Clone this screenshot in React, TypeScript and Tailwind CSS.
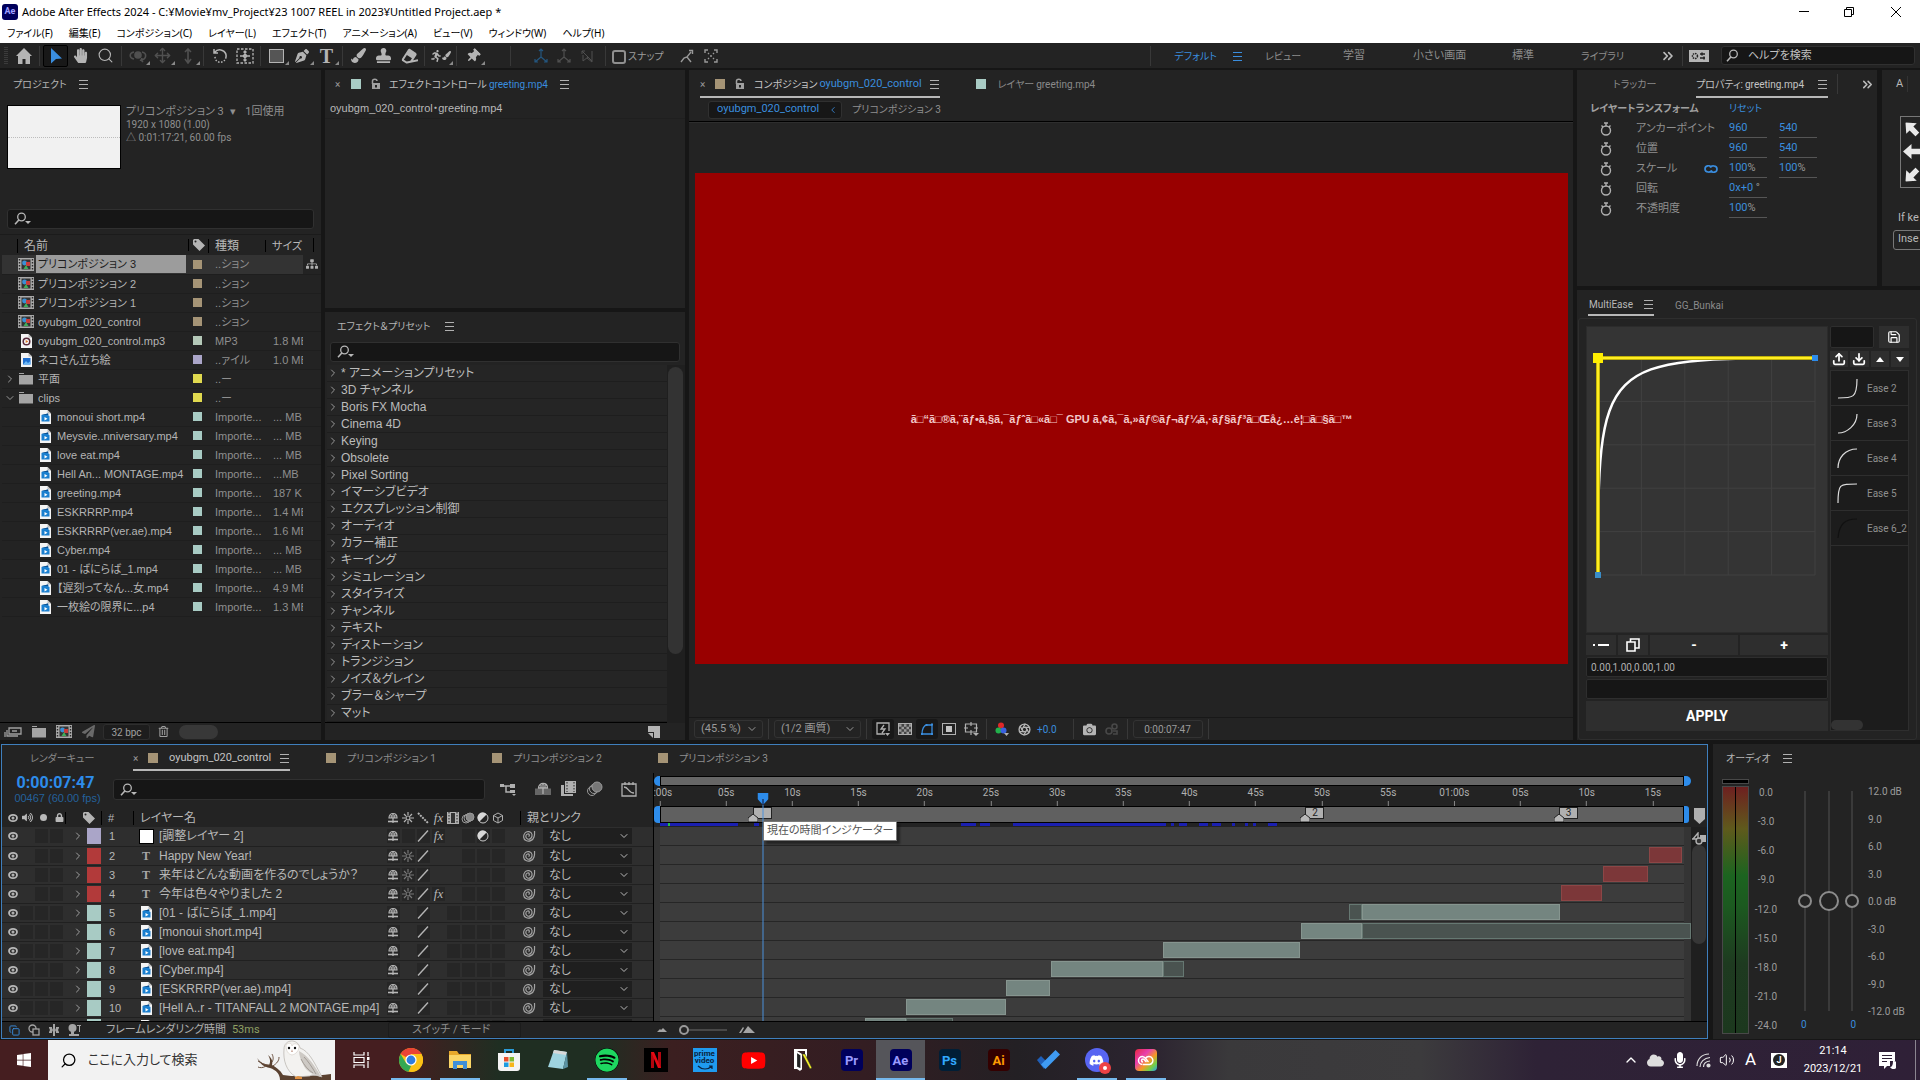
import React from "react";
import {
  FaHome, FaHandPaper, FaPenNib, FaPaintBrush, FaStamp, FaEraser, FaThumbtack, FaTag, FaVolumeUp, FaLock,
  FaLockOpen, FaRunning, FaCamera, FaMicrophone, FaSitemap, FaWindows, FaSpotify, FaYoutube, FaDiscord,
  FaCloud, FaRegTrashAlt, FaPaperPlane,
} from "react-icons/fa";
import { Search, ChevronRight, ChevronDown, ChevronsRight, Save, Upload, Download, Copy, Aperture, Move, Volume2, ChevronUp } from "lucide-react";

const LIST = "font-['Liberation_Sans','Noto_Sans_CJK_JP',sans-serif]";

function Burger({ className = "text-[#b0b0b0]" }: { className?: string }) {
  return (
    <svg className={"h-2.5 w-2.5 shrink-0 " + className} viewBox="0 0 10 10" stroke="currentColor" aria-hidden>
      <path d="M0 1.5h9M0 5.5h9M0 9.5h9" />
    </svg>
  );
}

function Magnifier({ menu = true }: { menu?: boolean }) {
  return (
    <svg className="h-3.5 w-[18px] shrink-0" viewBox="0 0 18 14" fill="none" aria-hidden>
      <circle cx="7.5" cy="5" r="3.8" stroke="#b8b8b8" strokeWidth="1.3" />
      <path d="M4.8 8L1 12.2" stroke="#b8b8b8" strokeWidth="1.6" />
      {menu && <path d="M11 9h6l-3 3z" fill="#b8b8b8" />}
    </svg>
  );
}

function SearchField({ label, className = "" }: { label: string; className?: string }) {
  return (
    <label className={"flex items-center rounded-[3px] border border-[#303030] bg-[#161616] pl-1.5 " + className}>
      <Magnifier />
      <input aria-label={label} className="min-w-0 flex-1 bg-transparent text-[11px] text-[#bbb] outline-none" />
    </label>
  );
}

function CompIcon() {
  return (
    <svg className="h-[13px] w-4 shrink-0" viewBox="0 0 16 13" aria-hidden>
      <rect width="16" height="13" fill="#a9a9a9" />
      <path d="M1.5 1v11M14.5 1v11" stroke="#2a2a2a" strokeWidth="1.4" strokeDasharray="1.6 1.4" />
      <rect x="3.5" y="1.5" width="9" height="10" fill="#333" />
      <circle cx="6.5" cy="5" r="2.4" fill="#3b8fd4" />
      <rect x="8" y="4" width="4" height="4" fill="#c93b3b" />
      <path d="M5.5 11l2.5-4 2.5 4z" fill="#3fae5a" />
    </svg>
  );
}

function FileIcon({ kind = "video" }: { kind?: "video" | "audio" | "image" }) {
  return (
    <svg className="h-3.5 w-[11px] shrink-0" viewBox="0 0 11 14" aria-hidden>
      <path d="M0 0h7.5L11 3.500V14H0z" fill="#f4f4f4" />
      <path d="M7.500 0L11 3.500H7.500z" fill="#b9b9b9" />
      {kind === "video" && <><path d="M1.500 5l6.500-1.500.4 2L9.500 6v5.500h-8z" fill="#1a7fcf" /><path d="M1.500 5l6.500-1.500.3 1.500H1.500z" fill="#0c4f8f" /><path d="M4.500 7l3 1.700-3 1.700z" fill="#fff" /></>}
      {kind === "image" && <><rect x="2" y="5" width="7.500" height="6.500" fill="#1f6fd0" /><path d="M2 11.500l3-3.500 2 2 2.500-2v3.500z" fill="#6bb8f5" /></>}
      {kind === "audio" && <><circle cx="5.500" cy="7.500" r="3.300" fill="none" stroke="#5a2b3b" strokeWidth="1.500" /><path d="M4.700 6l2.600 1.500-2.600 1.500z" fill="#e07a2b" /></>}
    </svg>
  );
}

function FolderIcon() {
  return (
    <svg className="h-3 w-3.5 shrink-0" viewBox="0 0 14 12" fill="#a4a4a4" aria-hidden>
      <path d="M0 0h5v1H0zM0 2h14v9.500H0z" />
    </svg>
  );
}

function Tag() {
  return (
    <svg className="h-3 w-3 shrink-0" viewBox="0 0 12 12" fill="#b4b4b4" aria-hidden>
      <path fillRule="evenodd" d="M0 1l1-1h4.500L12 6.500 6.500 12 0 5.500zM2.500 1.500a1 1 0 100 2 1 1 0 000-2z" />
    </svg>
  );
}

function Unlocked() {
  return (
    <svg className="h-3 w-[9px] shrink-0" viewBox="0 0 9 12" aria-hidden>
      <path d="M1.500 6V3C1.500.500 6 .500 6 3" fill="none" stroke="#a0a0a0" strokeWidth="1.500" />
      <path fillRule="evenodd" d="M1 5h8v6H1zM4 7h2v2.500H4z" fill="#a0a0a0" />
    </svg>
  );
}

/* ---------- title, menus, tool bar ---------- */

function TitleBar() {
  return (
    <header className="flex h-6 shrink-0 items-center bg-white text-black">
      <span className="ml-0.5 grid h-4 w-4 place-items-center rounded-[3px] bg-[#00005b] text-[9px] font-bold text-[#9f9fff]">Ae</span>
      <h1 className="ml-1 font-['Noto_Sans','Noto_Sans_CJK_JP',sans-serif] text-[11px]">Adobe After Effects 2024 - C:¥Movie¥mv_Project¥23 1007 REEL in 2023¥Untitled Project.aep *</h1>
      <div className="ml-auto flex">
        <button aria-label="最小化" className="grid h-6 w-[45px] place-items-center"><svg className="h-3 w-3" viewBox="0 0 12 12" stroke="#000"><path d="M1 5.500h10" /></svg></button>
        <button aria-label="元に戻す" className="grid h-6 w-[45px] place-items-center"><svg className="h-3 w-3" viewBox="0 0 12 12" stroke="#000" fill="none"><path d="M1.500 3.500h7v7h-7zM3.500 3V1.500h7v7H9" /></svg></button>
        <button aria-label="閉じる" className="grid h-6 w-[49px] place-items-center"><svg className="h-3 w-3" viewBox="0 0 12 12" stroke="#000" fill="none"><path d="M1 1l10 10M11 1L1 11" /></svg></button>
      </div>
    </header>
  );
}

const MENUS = ["ファイル(F)", "編集(E)", "コンポジション(C)", "レイヤー(L)", "エフェクト(T)", "アニメーション(A)", "ビュー(V)", "ウィンドウ(W)", "ヘルプ(H)"];

function MenuBar() {
  return (
    <nav className="flex h-[19px] shrink-0 items-center gap-4 bg-white pl-[7px] font-['Noto_Sans','Noto_Sans_CJK_JP',sans-serif] text-[10px] text-black">
      {MENUS.map((m) => <button key={m} className="whitespace-nowrap">{m}</button>)}
    </nav>
  );
}

function Tool({ label, children, active, dim, more, wide }: { label: string; children: React.ReactNode; active?: boolean; dim?: boolean; more?: boolean; wide?: boolean }) {
  return (
    <button aria-label={label} className={"relative grid h-[22px] shrink-0 place-items-center rounded-[2px] " + (wide ? "w-[23px] " : "w-[25px] ") + (active ? "border border-black bg-[#181818] text-[#3a8dde]" : dim ? "text-[#505050]" : "text-[#b4b4b4]")}>
      {children}
      {more && <span className="absolute right-0 bottom-0.5 h-0 w-0 border-b-4 border-l-4 border-b-[#8a8a8a] border-l-transparent" />}
    </button>
  );
}

function Sep({ className = "w-[7px]" }: { className?: string }) {
  return <span className={"flex h-5 shrink-0 justify-center " + className}><span className="h-full w-px bg-[#383838]" /></span>;
}

function ToolBar() {
  return (
    <div className="mb-0.5 flex h-[25px] shrink-0 items-center bg-[#232323] text-[10px]">
      <svg className="ml-1 h-[18px] w-1" viewBox="0 0 4 18" stroke="#555" strokeDasharray="1 1"><path d="M1 0v18M3 0v18" /></svg>
      <span className="w-[3px]" />
      <Tool label="ホーム"><svg className="h-4 w-4" viewBox="0 0 16 16" fill="currentColor"><path d="M8 0l8 8h-2v8H9.500v-5h-3v5H2V8H0z" /></svg></Tool>
      <Sep />
      <Tool label="選択ツール" active><svg className="h-4 w-3.5" viewBox="0 0 14 16" fill="currentColor"><path d="M2 0l11 10.500-6 .5-5 4.500z" /></svg></Tool>
      <Tool label="手のひらツール"><FaHandPaper size={15} /></Tool>
      <Tool label="ズームツール"><Search size={17} strokeWidth={1.6} /></Tool>
      <Sep />
      <Tool label="カメラ周回" dim more><svg className="h-4 w-[18px]" viewBox="0 0 18 16" fill="none" stroke="currentColor" strokeWidth="1.600"><circle cx="9" cy="7" r="3" fill="currentColor" /><path d="M5 11C0 10 0 5 5 4M13 4c5 1 5 7-1 8l1-2M12 12l2 2" /></svg></Tool>
      <Tool label="カメラパン" dim more><Move size={17} strokeWidth={2} /></Tool>
      <Tool label="カメラドリー" dim more><svg className="h-4 w-3" viewBox="0 0 12 16" fill="none" stroke="currentColor" strokeWidth="1.600"><path d="M6 1v14M3 4l3-3 3 3M3 11l3 4 3-4" /></svg></Tool>
      <Sep />
      <Tool label="回転ツール"><svg className="h-4 w-[18px]" viewBox="0 0 18 16" fill="none" stroke="currentColor" strokeWidth="1.500"><path d="M3 1v4h4M3.500 4.500C8-1 16 3 15 9" /><path d="M15 9c-1 7-11 7-11-.5" strokeDasharray="1.500 1.500" /></svg></Tool>
      <Tool label="アンカーポイントツール"><svg className="h-4 w-[18px]" viewBox="0 0 18 16" fill="none" stroke="currentColor" strokeWidth="1.300"><rect x="1" y="1" width="16" height="14" strokeDasharray="2.500 1.500" /><path d="M9 3v10M4 8h10M7.500 4.500L9 3l1.500 1.500M7.500 11.500L9 13l1.500-1.500" /><circle cx="9" cy="8" r="1.500" /></svg></Tool>
      <Sep />
      <Tool label="長方形ツール" more><span className="h-3.5 w-[15px] border border-[#b4b4b4] bg-[#555]" /></Tool>
      <Tool label="ペンツール" more><FaPenNib size={14} /></Tool>
      <Tool label="横書き文字ツール" more><span className="font-['Liberation_Serif',serif] text-[20px] leading-5 font-bold">T</span></Tool>
      <Sep />
      <Tool label="ブラシツール"><FaPaintBrush size={15} /></Tool>
      <Tool label="コピースタンプツール"><FaStamp size={15} /></Tool>
      <Tool label="消しゴムツール"><FaEraser size={16} className="-rotate-12" /></Tool>
      <Sep />
      <Tool label="ロトブラシツール" more><span className="flex items-center"><FaRunning size={12} /><FaPaintBrush size={9} /></span></Tool>
      <Sep />
      <Tool label="パペットピンツール" more><FaThumbtack size={14} className="rotate-45" /></Tool>
      <Sep className="ml-4 w-[18px]" />
      <span className="w-2.5" />
      <Tool label="ローカル軸" wide dim><Axis className="text-[#24567f]" /></Tool>
      <Tool label="ワールド軸" wide dim><Axis /></Tool>
      <Tool label="ビュー軸" wide dim><svg className="h-3.5 w-3.5" viewBox="0 0 14 14" fill="none" stroke="currentColor"><path d="M2 2l10 10M2 5V2h3M12 2v11L7 9M3 6v6l5-4" /></svg></Tool>
      <Sep className="w-3.5" />
      <label className="flex items-center pt-0.5 text-[#9c9c9c]">
        <input type="checkbox" className="mr-0.5 ml-0 h-3.5 w-3.5 appearance-none rounded-[3px] border-2 border-[#8f8f8f]" />
        スナップ
      </label>
      <button aria-label="スナップ延長" className="ml-4 text-[#999]"><svg className="h-3.5 w-3.5" viewBox="0 0 14 14" fill="none" stroke="currentColor" strokeWidth="1.400"><path d="M1 13l3-4 3-1 4-5M7 8l4 5M9 1.500h3.500V5" /></svg></button>
      <button aria-label="スナップ範囲" className="ml-2.5 text-[#999]"><svg className="h-3.5 w-3.5" viewBox="0 0 14 14" fill="none" stroke="currentColor" strokeWidth="1.400"><path d="M1 4V1h3M10 1h3v3M13 10v3h-3M4 13H1v-3M4 5l1-1M9 4l1 1M10 9l-1 1M5 10L4 9M6 7h2" /></svg></button>
      <div className="ml-auto flex items-center text-[#8c8c8c]">
        <Sep />
        <button className="ml-5 pt-0.5 text-[#3a8dde]">デフォルト</button>
        <Burger className="mr-[22px] ml-4 text-[#3a8dde]" />
        <button className="w-[78px] pt-0.5 text-left">レビュー</button>
        <button className="w-[70px] pt-0.5 text-left text-[11px]">学習</button>
        <button className="w-[99px] pt-0.5 text-left text-[11px]">小さい画面</button>
        <button className="w-[69px] pt-0.5 text-left text-[11px]">標準</button>
        <button className="w-[79px] pt-0.5 text-left">ライブラリ</button>
        <button aria-label="その他のワークスペース" className="text-[#bbb]"><ChevronsRight size={16} strokeWidth={2.500} /></button>
        <Sep className="w-[13px]" />
        <span className="flex h-3 w-5 items-center justify-center bg-[#b4b4b4]">
          <svg className="h-2.5 w-4" viewBox="0 0 16 10" fill="none" stroke="#222" strokeWidth="1.500"><circle cx="4" cy="5" r="2.500" strokeDasharray="1.500 .8" /><path d="M9 3h5M9 7h5M11 1.500v3M13 5.500v3" /></svg>
        </span>
        <label className="mr-[5px] ml-3 flex h-[19px] w-[194px] items-center rounded-[3px] border border-[#303030] bg-[#161616] pl-1">
          <Magnifier menu={false} />
          <input aria-label="ヘルプを検索" placeholder="ヘルプを検索" className="ml-1 w-full bg-transparent pt-px text-[11px] outline-none placeholder:text-[#c0c0c0]" />
        </label>
      </div>
    </div>
  );
}

function Axis({ className = "" }: { className?: string }) {
  return <svg className={"h-4 w-4 " + className} viewBox="0 0 16 16" fill="none" stroke="currentColor" strokeWidth="1.200"><path d="M8 1v8M8 9l-6 5M8 9l6 5M6 3l2-2 2 2M2 11v3h3M14 11v3h-3" /></svg>;
}

/* ---------- project ---------- */

type Item = { name: string; icon: "comp" | "audio" | "image" | "folder" | "video"; color: string; type: string; size?: string; open?: boolean };
const TAN = "bg-[#a59476]";
const MINT = "bg-[#a8cbc4]";
const clip = (name: string, size: string): Item => ({ name, icon: "video", color: MINT, type: "Importe...", size });
const ITEMS: Item[] = [
  { name: "プリコンポジション 3", icon: "comp", color: TAN, type: "..ション" },
  { name: "プリコンポジション 2", icon: "comp", color: TAN, type: "..ション" },
  { name: "プリコンポジション 1", icon: "comp", color: TAN, type: "..ション" },
  { name: "oyubgm_020_control", icon: "comp", color: TAN, type: "..ション" },
  { name: "oyubgm_020_control.mp3", icon: "audio", color: "bg-[#b4c8b8]", type: "MP3", size: "1.8 MB" },
  { name: "ネコさん立ち絵", icon: "image", color: "bg-[#aaa5c8]", type: "..ァイル", size: "1.0 MB" },
  { name: "平面", icon: "folder", color: "bg-[#e0d94f]", type: "..ー" },
  { name: "clips", icon: "folder", color: "bg-[#e0d94f]", type: "..ー", open: true },
  clip("monoui short.mp4", "... MB"), clip("Meysvie..nniversary.mp4", "... MB"), clip("love eat.mp4", "... MB"),
  clip("Hell An... MONTAGE.mp4", "...MB"), clip("greeting.mp4", "187 K"), clip("ESKRRRP.mp4", "1.4 MB"),
  clip("ESKRRRP(ver.ae).mp4", "1.6 MB"), clip("Cyber.mp4", "... MB"), clip("01 - ばにらば_1.mp4", "... MB"),
  clip("【遅刻ってなん...女.mp4", "4.9 MB"), clip("一枚絵の限界に...p4", "1.3 MB"),
];

function ProjectPanel() {
  return (
    <section className="flex w-[321px] shrink-0 flex-col bg-[#232323]">
      <div className="flex h-7 items-center gap-3 pl-[13px] text-[#b4b4b4]"><button className="text-[10px]">プロジェクト</button><Burger /></div>
      <div className="mt-[7px] ml-[7px] flex h-[104px] gap-[5px]">
        <div className="flex h-16 w-[114px] items-center border border-black bg-[#f1f1f1]"><span className="w-full border-t border-dotted border-[#bdbdbd]" /></div>
        <div className="text-[11px] leading-[13px] text-[#8f8f8f]">
          <p>プリコンポジション 3 <span className="ml-1">▾</span> <span className="ml-1.5">1回使用</span></p>
          <p className="text-[10px]">1920 x 1080 (1.00)</p>
          <p className="text-[10px]">△ 0:01:17:21, 60.00 fps</p>
        </div>
      </div>
      <SearchField label="プロジェクトを検索" className="mx-[7px] h-5 shrink-0" />
      <div className={"mt-[5px] min-h-0 flex-1 overflow-hidden border-t border-[#1b1b1b] pl-0.5 " + LIST}>
        <table className="w-full table-fixed border-collapse text-[11px] leading-4">
          <colgroup><col /><col className="w-5" /><col className="w-[57px]" /><col className="w-[38px]" /><col className="w-[18px]" /></colgroup>
          <thead>
            <tr className="h-5 text-left text-[12px] text-[#b8b8b8]">
              <th className="p-0 pt-0.5 pl-[15px] font-normal"><span className="border-l border-black pl-1.5">名前</span></th>
              <th className="p-0"><span className="flex border-l border-black pl-1"><Tag /></span></th>
              <th className="p-0 pt-0.5 font-normal"><span className="border-l border-black pl-1.5">種類</span></th>
              <th className="p-0 pt-0.5 text-[11px] font-normal whitespace-nowrap"><span className="border-l border-black pl-1.5">サイズ</span></th>
              <th className="p-0"><span className="ml-2.5 block h-3.5 border-l border-black" /></th>
            </tr>
          </thead>
          <tbody>
            {ITEMS.map((it, i) => {
              const cell = "overflow-hidden whitespace-nowrap p-0 " + (i === 0 ? "bg-[#333333]" : "");
              return (
                <tr key={it.name} className="h-[19px] border-b border-[#1e1e1e]">
                  <td className={cell}>
                    <div className={"flex items-center " + (it.icon === "video" ? "pl-[38px]" : "")}>
                      {it.icon !== "video" && <span className="flex w-4 shrink-0 justify-center text-[#9a9a9a]">{it.icon === "folder" && (it.open ? <ChevronDown size={12} /> : <ChevronRight size={12} />)}</span>}
                      {it.icon === "comp" ? <CompIcon /> : it.icon === "folder" ? <span className="flex w-4 justify-center"><FolderIcon /></span> : it.icon === "video" ? <FileIcon /> : <span className="flex w-4 justify-center"><FileIcon kind={it.icon} /></span>}
                      <span className={"h-[18px] leading-[18px] " + (i === 0 ? "ml-0.5 mr-0.5 flex-1 bg-[#9c9c9c] pl-0.5 text-[#1c1c1c]" : it.icon === "video" ? "pl-1.5 text-[#b4b4b4]" : "pl-1 text-[#b4b4b4]")}>{it.name}</span>
                    </div>
                  </td>
                  <td className={cell}><span className={"ml-[5px] block h-[9px] w-[9px] " + it.color} /></td>
                  <td className={cell + " pl-[7px] text-[#8f8f8f]"}>{it.type}</td>
                  <td className={cell + " pl-2 text-[#8f8f8f]"}>{it.size}</td>
                  <td className="p-0 pl-[3px] text-[#b0b0b0]">{i === 0 && <FaSitemap size={12} />}</td>
                </tr>
              );
            })}
          </tbody>
        </table>
      </div>
      <div className="flex h-[18px] shrink-0 items-center border-t border-black text-[10px] text-[#a0a0a0]">
        <button aria-label="フッテージを変換" className="ml-1"><svg className="h-3 w-[18px]" viewBox="0 0 18 12" fill="none" stroke="currentColor" strokeWidth="1.300"><path d="M5 2h12v6H5zM8 5h5M3 4v6h11M1 6v5" /></svg></button>
        <button aria-label="新規フォルダー" className="ml-2.5"><FolderIcon /></button>
        <button aria-label="新規コンポジション" className="ml-2.5"><CompIcon /></button>
        <button aria-label="プロキシ" className="ml-2.5 text-[#6a6a6a]"><FaPaperPlane size={13} /></button>
        <button className="ml-2 h-4 w-[47px] rounded-[3px] border border-[#2e2e2e] bg-[#1d1d1d]">32 bpc</button>
        <button aria-label="削除" className="ml-2"><FaRegTrashAlt size={11} /></button>
        <span className="ml-2.5 h-3.5 w-[39px] rounded-full bg-[#383838]" />
      </div>
    </section>
  );
}

/* ---------- effects ---------- */

const EFFECTS = ["* アニメーションプリセット", "3D チャンネル", "Boris FX Mocha", "Cinema 4D", "Keying", "Obsolete", "Pixel Sorting", "イマーシブビデオ", "エクスプレッション制御", "オーディオ", "カラー補正", "キーイング", "シミュレーション", "スタイライズ", "チャンネル", "テキスト", "ディストーション", "トランジション", "ノイズ＆グレイン", "ブラー＆シャープ", "マット"];

function EffectsColumn() {
  return (
    <div className="flex w-[360px] shrink-0 flex-col gap-1">
      <section className="h-[238px] shrink-0 bg-[#232323] text-[10px]">
        <div className="flex h-7 items-center text-[#c0c0c0]">
          <button aria-label="タブを閉じる" className="ml-2.5 w-4 text-left text-[#999]">×</button>
          <span className="h-2.5 w-2.5 bg-[#a8cbc4]" />
          <span className="ml-2.5"><Unlocked /></span>
          <button className="ml-[9px] flex items-center gap-0.5"><span>エフェクトコントロール</span> <span className="text-[#3a8dde]">greeting.mp4</span></button>
          <Burger className="ml-3 text-[#b0b0b0]" />
        </div>
        <p className={"border-b border-[#1f1f1f] pl-[5px] text-[11px] leading-5 text-[#b8b8b8] " + LIST}>oyubgm_020_control・greeting.mp4</p>
      </section>
      <section className="flex min-h-0 flex-1 flex-col bg-[#232323]">
        <div className="flex h-7 items-center gap-3.5 pl-3 text-[10px] text-[#b4b4b4]"><button>エフェクト＆プリセット</button><Burger /></div>
        <SearchField label="エフェクトを検索" className="mx-[5px] mt-0.5 h-5 shrink-0" />
        <div className="mt-[3px] flex min-h-0 flex-1">
          <ul className={"min-w-0 flex-1 overflow-hidden border-b border-black text-[12px] text-[#bcbcbc] " + LIST}>
            {EFFECTS.map((e) => (
              <li key={e} className="ml-0.5 flex h-[17px] items-center border-b border-[#1e1e1e] bg-[#252525]">
                <ChevronRight size={12} className="mr-0.5 text-[#9a9a9a]" />
                <span className="leading-4">{e}</span>
              </li>
            ))}
          </ul>
          <div className="w-[18px] bg-[#1f1f1f]"><div className="mt-0.5 ml-px h-[287px] w-[15px] rounded-full bg-[#333333]" /></div>
        </div>
        <div className="flex h-[17px] shrink-0 items-center justify-end pr-[25px]">
          <button aria-label="新規アニメーションプリセット"><svg className="h-3 w-3" viewBox="0 0 12 12" fill="#b4b4b4"><path d="M0 0h12v12H6V6H0z" /><path d="M0 7l5 5V7z" /></svg></button>
        </div>
      </section>
    </div>
  );
}

/* ---------- composition viewer ---------- */

function CompPanel() {
  return (
    <section className="flex min-w-0 flex-1 flex-col bg-[#232323] text-[10px]">
      <div className="flex h-7 shrink-0 items-stretch text-[#c8c8c8]">
        <div className="ml-[11px] flex items-center border-b-2 border-[#b8b8b8] pt-0.5">
          <button aria-label="タブを閉じる" className="w-[15px] text-left text-[#999]">×</button>
          <span className="h-2.5 w-2.5 bg-[#a59476]" />
          <span className="ml-2.5"><Unlocked /></span>
          <button className="ml-2.5 flex items-center gap-0.5"><span>コンポジション</span><span className="text-[11px] text-[#3a8dde]">oyubgm_020_control</span></button>
          <Burger className="ml-2 text-[#b0b0b0]" />
        </div>
        <button className="ml-9 flex items-center gap-0.5 text-[#8a8a8a]"><span className="mr-2.5 h-2.5 w-2.5 bg-[#a8cbc4]" /><span>レイヤー</span><span>greeting.mp4</span></button>
      </div>
      <div className="flex h-6 shrink-0 items-center border-b border-black">
        <button className="ml-[19px] flex h-[18px] w-[134px] items-center justify-between rounded-[3px] border border-[#303030] bg-[#171717] pr-[3px] pl-2 text-[11px] text-[#3a8dde]">oyubgm_020_control<ChevronRight size={10} className="rotate-180" /></button>
        <button className="ml-2.5 text-[#8f8f8f]">プリコンポジション 3</button>
      </div>
      <div className="flex min-h-0 flex-1 flex-col border-t border-[#2e2e2e] pt-[50px] pr-[5px] pb-[53px] pl-1.5">
        <div className="grid flex-1 place-items-center bg-[#990000]">
          <p className="pt-px font-['Liberation_Sans',sans-serif] text-[11px] font-bold whitespace-nowrap text-[#f2c9c9]">ã□“ã□®ã‚¨ãƒ•ã‚§ã‚¯ãƒˆã□«ã□¯ GPU ã‚¢ã‚¯ã‚»ãƒ©ãƒ¬ãƒ¼ã‚·ãƒ§ãƒ³ã□Œå¿…è¦□ã□§ã□™</p>
        </div>
      </div>
      <div className="flex h-[23px] shrink-0 items-center border-t border-[#181818] pl-[5px] text-[11px] text-[#9a9a9a]">
        <button className="flex h-[18px] w-[69px] items-center justify-between rounded-[3px] border border-[#333] px-1.5 pr-1 whitespace-nowrap">(45.5 %)<ChevronDown size={12} /></button>
        <Sep className="w-[11px]" />
        <button className="flex h-[18px] w-[87px] items-center justify-between rounded-[3px] border border-[#333] px-1.5 pr-1 whitespace-nowrap">(1/2 画質)<ChevronDown size={12} /></button>
        <Sep className="w-[11px]" />
        <button aria-label="高速プレビュー" className="grid h-5 w-[22px] place-items-center rounded-[3px] bg-[#181818] text-[#b0b0b0]"><svg className="h-3.5 w-3.5" viewBox="0 0 14 14" fill="none" stroke="currentColor" strokeWidth="1.300"><path d="M9 12H1V1h12v8M8 3L5 7h4l-3 4" /><path d="M9 11h5l-2.500 3z" fill="currentColor" stroke="none" /></svg></button>
        <button aria-label="透明グリッド" className="grid w-[22px] place-items-center"><svg className="h-3 w-3.5" viewBox="0 0 14 12"><rect x=".5" y=".5" width="13" height="11" fill="#444" stroke="#b0b0b0" /><path d="M1 2.500h12M1 7.500h12" stroke="#999" strokeWidth="2.500" strokeDasharray="2.500 2.500" /><path d="M3.500 5h10M3.500 10h10" stroke="#999" strokeWidth="2.500" strokeDasharray="2.500 2.500" /></svg></button>
        <button aria-label="マスクの表示" className="grid h-5 w-[22px] place-items-center rounded-[3px] bg-[#181818] text-[#3a8dde]"><svg className="h-3.5 w-3.5" viewBox="0 0 14 14" fill="none" stroke="currentColor" strokeWidth="1.300"><path d="M2 12c0-5 2-9 5-9h5v9z" /><path d="M1 11h2v2H1zM11 11h2v2h-2zM11 1.500h2v2h-2zM5.500 2h2v2h-2z" fill="currentColor" stroke="none" /></svg></button>
        <button aria-label="目標範囲" className="grid w-[22px] place-items-center"><span className="grid h-3 w-3.5 place-items-center border border-[#b0b0b0]"><span className="h-1.5 w-1.5 bg-[#c4c4c4]" /></span></button>
        <button aria-label="グリッドとガイド" className="grid w-[22px] place-items-center text-[#b0b0b0]"><svg className="h-3.5 w-[15px]" viewBox="0 0 15 14" fill="none" stroke="currentColor" strokeWidth="1.200"><path d="M1.500 2h11v8h-11zM7 0v4M7 8v5M0 6h4M10 6h4" /><path d="M9 11h6l-3 3z" fill="currentColor" stroke="none" /></svg></button>
        <Sep className="w-[9px]" />
        <button aria-label="チャンネル" className="grid w-[22px] place-items-center"><svg className="h-3.5 w-3.5" viewBox="0 0 14 14"><circle cx="6" cy="3.500" r="3" fill="#e02828" /><circle cx="3.500" cy="8.500" r="3" fill="#22b14c" /><circle cx="8.500" cy="8.500" r="3" fill="#3a62e0" /><path d="M9 11h5l-2.500 3z" fill="#b0b0b0" /></svg></button>
        <button aria-label="露出をリセット" className="grid w-[22px] place-items-center text-[#b4b4b4]"><Aperture size={13} strokeWidth={2.500} /></button>
        <span className="mx-0.5 text-[10px] text-[#3a8dde]">+0.0</span>
        <Sep className="ml-2 w-[13px]" />
        <button aria-label="スナップショット" className="grid w-5 place-items-center text-[#b4b4b4]"><FaCamera size={13} /></button>
        <button aria-label="スナップショットを表示" className="grid w-6 place-items-center text-[#484848]"><svg className="h-3 w-3.5" viewBox="0 0 14 12" fill="none" stroke="currentColor" strokeWidth="1.600"><circle cx="9.500" cy="3.500" r="2.500" /><circle cx="4" cy="8" r="3" /><path d="M8 8h4v3H8" /></svg></button>
        <Sep />
        <button className="ml-0.5 h-[18px] w-[70px] rounded-[3px] border border-[#333] text-[10px]">0:00:07:47</button>
        <Sep className="w-[11px]" />
      </div>
    </section>
  );
}

/* ---------- properties, align, easing ---------- */

const PROPS: { name: string; values: string[]; link?: boolean }[] = [
  { name: "アンカーポイント", values: ["960", "540"] },
  { name: "位置", values: ["960", "540"] },
  { name: "スケール", values: ["100%", "100%"], link: true },
  { name: "回転", values: ["0x+0 °"] },
  { name: "不透明度", values: ["100%"] },
];

function PropertiesPanel() {
  return (
    <section className="w-[300px] bg-[#232323] text-[10px]">
      <div className="flex h-7 items-stretch">
        <button className="ml-9 w-[83px] text-left text-[#8a8a8a]">トラッカー</button>
        <div className="flex w-[132px] items-center justify-between border-b-2 border-[#b8b8b8] pt-0.5 text-[#c4c4c4]"><button className="flex items-center gap-0.5"><span>プロパティ:</span><span>greeting.mp4</span></button><Burger /></div>
        <Sep className="w-[18px] self-center" />
        <button aria-label="その他のパネル" className="ml-auto pr-0.5 text-[#bbb]"><ChevronsRight size={15} strokeWidth={2.500} /></button>
      </div>
      <div className="flex h-[21px] items-center pl-[13px]"><h2 className="w-[139px] font-bold text-[#a0a0a0]">レイヤートランスフォーム</h2><button className="text-[#3a8dde]">リセット</button></div>
      {PROPS.map((p) => (
        <div key={p.name} className="flex h-5 items-center text-[11px] text-[#8f8f8f]">
          <button aria-label={p.name + "のストップウォッチ"} className="ml-[23px] w-9"><svg className="h-3.5 w-3" viewBox="0 0 12 14" fill="none" stroke="#b0b0b0" strokeWidth="1.400"><circle cx="6" cy="8.500" r="4.500" /><path d="M4 1h4M6 1v3M1.500 3.500L3 5M10.500 3.500L9 5" /></svg></button>
          <span className="w-[66px] whitespace-nowrap">{p.name}</span>
          <span className="w-[27px] pl-0.5 text-[#3a8dde]">{p.link && <svg className="h-2 w-3.5" viewBox="0 0 14 8" fill="none" stroke="currentColor" strokeWidth="1.700"><path d="M8 5.500C7 7.500 1 8 1 4s5-4 6.500-1.500M6 2.500C7 .5 13 0 13 4s-5 4-6.500 1.500" /></svg>}</span>
          {p.values.map((v, k) => (
            <span key={k} className="mr-3 h-[18px] w-[38px] border-b border-[#555] leading-4 text-[#3a8dde]">{v.replace("%", "").replace(" °", "")}<span className="text-[#999]">{v.includes("%") ? "%" : v.includes("°") ? " °" : ""}</span></span>
          ))}
        </div>
      ))}
    </section>
  );
}

function AlignPanel() {
  return (
    <section className="min-w-0 flex-1 overflow-hidden bg-[#232323] text-[11px] text-[#b8b8b8]">
      <div className="flex h-7 items-center pl-3.5"><button className="border-r border-[#333] pr-1">A</button></div>
      <div className="mt-[18px] ml-[18px] flex h-[72px] flex-col justify-around overflow-hidden border-y border-l border-[#777] pl-0.5">
        {["-rotate-45", "-rotate-90", "-rotate-135"].map((r) => (
          <button key={r} aria-label="整列" className="w-5"><svg className={"h-[17px] w-[17px] " + r} viewBox="0 0 16 16" fill="#e8e8e8"><path d="M8 0l7 8h-4.500v8h-5V8H1z" /></svg></button>
        ))}
      </div>
      <p className="mt-[22px] ml-4 whitespace-nowrap">If ke</p>
      <button className="mt-[3px] ml-[11px] h-5 w-20 rounded-[3px] border border-[#777] pl-1 text-left">Inse</button>
    </section>
  );
}

const EASES = [
  { name: "Ease 2", d: "M1 20C16 20 20 20 20 1" },
  { name: "Ease 3", d: "M1 20C10 20 20 12 20 1" },
  { name: "Ease 4", d: "M1 20C1 10 8 1 20 1" },
  { name: "Ease 5", d: "M1 20C1 1 2 1 20 1" },
  { name: "Ease 6_2", d: "M1 20C2 6 8 1 20 1", dim: true },
];

function EasePanel() {
  const btn = "grid place-items-center bg-[#2e2e2e] text-white";
  const grid = [0, 1, 2, 3, 4, 5].map((i) => 12 + i * 43.4);
  const rows = [0, 1, 2, 3, 4, 5].map((i) => 32 + i * 43.4);
  return (
    <section className="flex min-h-0 flex-1 flex-col bg-[#232323] text-[11px]">
      <div className="flex h-[26px] shrink-0 text-[#b8b8b8]">
        <div className="ml-[11px] flex w-[66px] items-center justify-between border-b-2 border-[#b8b8b8] pt-1 pl-px"><button className="text-[10px]">MultiEase</button><Burger /></div>
        <button className="ml-[21px] pt-1 text-[10px] text-[#8a8a8a]">GG_Bunkai</button>
      </div>
      <div className="mt-0.5 mr-[3px] ml-px flex min-h-0 flex-1 gap-0.5 rounded-[3px] border border-[#2e2e2e] px-[7px] pt-[7px] pb-2">
        <div className="flex w-[242px] flex-col">
          <div className="min-h-0 flex-1 border border-[#2b2b2b] bg-[#343434]">
            <svg className="block h-[300px] w-[240px]" viewBox="1 1 240 300" aria-label="イージング曲線">
              <path d={grid.map((x) => `M${x} 32V249`).join("") + rows.map((y) => `M12 ${y}H229`).join("")} stroke="#414141" fill="none" />
              <path d="M12 249C12 32 12 32 229 32" stroke="#fff" strokeWidth="2.500" fill="none" />
              <path d="M12 249V32H229" stroke="#a89a00" strokeWidth="4" fill="none" />
              <path d="M12 249V32H229" stroke="#ffee22" strokeWidth="2.600" fill="none" />
              <rect x="7" y="27" width="10" height="10" fill="#ffee00" />
              <rect x="226" y="29" width="6" height="6" fill="#2d8ceb" />
              <rect x="9" y="246" width="6" height="6" fill="#3a8dc8" />
            </svg>
          </div>
          <div className="mt-0.5 flex h-5 gap-0.5 text-[14px] leading-5 font-bold">
            <button aria-label="点と線" className={btn + " w-[30px]"}><svg className="h-2 w-4" viewBox="0 0 16 8" stroke="#fff" strokeWidth="2"><path d="M0 4h2M5 4h11" /></svg></button>
            <button aria-label="コピー" className={btn + " w-[30px]"}><svg className="h-3.5 w-3.5" viewBox="0 0 14 14" fill="none" stroke="#fff" strokeWidth="1.600"><path d="M1 4h8v9H1zM4.500 4V1H13v9H9" /></svg></button>
            <button className={btn + " flex-1"}>-</button>
            <button className={btn + " flex-1"}>+</button>
          </div>
          <input aria-label="ベジェ値" defaultValue="0.00,1.00,0.00,1.00" className="mt-0.5 h-5 w-full rounded-[2px] border border-[#2e2e2e] bg-[#161616] px-1 text-[10px] text-[#b0b0b0]" />
          <input aria-label="メモ" className="mt-0.5 h-5 w-full rounded-[2px] border border-[#2e2e2e] bg-[#161616] px-1" />
          <button className="mt-0.5 h-[30px] bg-[#2e2e2e] text-[14px] font-bold text-white">APPLY</button>
        </div>
        <div className="flex min-w-0 flex-1 flex-col">
          <div className="flex h-[22px] justify-between gap-1"><input aria-label="プリセット名" className="w-11 rounded-[2px] border border-[#2e2e2e] bg-[#161616]" /><button aria-label="保存" className={btn + " w-[30px]"}><Save size={14} /></button></div>
          <div className="mt-[3px] grid h-4 grid-cols-4 gap-0.5">
            <button aria-label="書き出し" className={btn}><Upload size={14} strokeWidth={3} /></button>
            <button aria-label="読み込み" className={btn}><Download size={14} strokeWidth={3} /></button>
            <button aria-label="上へ" className={btn}><span className="border-x-4 border-b-[5px] border-x-transparent border-b-white" /></button>
            <button aria-label="下へ" className={btn}><span className="border-x-4 border-t-[5px] border-x-transparent border-t-white" /></button>
          </div>
          <ul className="mt-[3px] flex min-h-0 flex-1 flex-col overflow-hidden border border-[#2e2e2e] bg-[#1c1c1c] text-[10px] text-[#8f8f8f]">
            {EASES.map((e) => (
              <li key={e.name} className="flex h-[35px] shrink-0 items-center border-b border-[#2e2e2e] pl-1.5">
                <svg className="h-[21px] w-[21px] shrink-0" viewBox="0 0 21 21" fill="none"><path d={e.d} stroke={e.dim ? "#111" : "#ddd"} strokeWidth="1.200" /></svg>
                <span className="ml-[9px] whitespace-nowrap">{e.name}</span>
              </li>
            ))}
            <li className="mt-auto h-2.5 w-8 rounded-full bg-[#333]" />
          </ul>
        </div>
      </div>
    </section>
  );
}

/* ---------- timeline ---------- */

const DURATION = 77.35;
const pct = (s: number) => `${(s / DURATION) * 100}%`;

type Layer = { name: string; color: string; kind: "adj" | "text" | "video"; fx?: boolean; bar?: [number, number]; dims?: [number, number][]; red?: boolean };
const RED = "bg-[#b23a3a]";
const LAYERS: Layer[] = [
  { name: "[調整レイヤー 2]", color: "bg-[#aaa5c8]", kind: "adj", fx: true },
  { name: "Happy New Year!", color: RED, kind: "text", bar: [74.7, 77.2], red: true },
  { name: "来年はどんな動画を作るのでしょうか？", color: RED, kind: "text", bar: [71.2, 74.6], red: true },
  { name: "今年は色々やりました 2", color: RED, kind: "text", fx: true, bar: [68.05, 71.15], red: true },
  { name: "[01 - ばにらば_1.mp4]", color: MINT, kind: "video", bar: [53, 68], dims: [[52.05, 53]] },
  { name: "[monoui short.mp4]", color: MINT, kind: "video", bar: [48.4, 53], dims: [[53, 77.9]] },
  { name: "[love eat.mp4]", color: MINT, kind: "video", bar: [38, 48.35] },
  { name: "[Cyber.mp4]", color: MINT, kind: "video", bar: [29.5, 38], dims: [[38, 39.6]] },
  { name: "[ESKRRRP(ver.ae).mp4]", color: MINT, kind: "video", bar: [26.1, 29.45] },
  { name: "[Hell A..r - TITANFALL 2 MONTAGE.mp4]", color: MINT, kind: "video", bar: [18.6, 26.1] },
  { name: "", color: MINT, kind: "video", bar: [15.5, 18.6], dims: [[18.6, 22.1]] },
];

function Eye() {
  return <svg className="h-2.5 w-2.5" viewBox="0 0 10 10" fill="none" stroke="#b8b8b8" strokeWidth="1.800"><ellipse cx="5" cy="5" rx="4" ry="3.200" /><circle cx="5" cy="5" r=".6" /></svg>;
}
function Shy() {
  return <svg className="h-3 w-3" viewBox="0 0 12 12" fill="none" stroke="#b8b8b8" strokeWidth="1.200"><path d="M2 6C2 0 10 0 10 6zM6 2v9M4.200 3v3M7.800 3v3" /><path d="M1 9.500h10" strokeWidth="1.600" /></svg>;
}
function Star({ className = "text-[#777]" }: { className?: string }) {
  return <svg className={"h-3 w-3 " + className} viewBox="0 0 12 12" fill="none" stroke="currentColor" strokeWidth="1.200"><circle cx="6" cy="6" r="2" /><path d="M6 0v3M6 9v3M0 6h3M9 6h3M2 2l2 2M8 8l2 2M10 2L8 4M4 8l-2 2" /></svg>;
}
function Slash() {
  return <svg className="h-3 w-3" viewBox="0 0 12 12" stroke="#b4b4b4" strokeWidth="1.400"><path d="M1 11.500L11 .5" /></svg>;
}
function Fx() {
  return <span className="font-['Liberation_Serif',serif] text-[13px] leading-3 italic">fx</span>;
}
function Adjust() {
  return <svg className="h-3 w-3" viewBox="0 0 12 12"><circle cx="6" cy="6" r="5" fill="none" stroke="#c8c8c8" /><path d="M9.500 2.500A5 5 0 102.500 9.500z" fill="#d8d8d8" /></svg>;
}
function Blur() {
  return <svg className="h-3 w-3.5" viewBox="0 0 14 12" fill="none" stroke="#999"><circle cx="5" cy="7" r="4" /><circle cx="7" cy="6" r="4" /><circle cx="9" cy="5" r="4" fill="#888" /></svg>;
}
function Film() {
  return <svg className="h-3 w-3" viewBox="0 0 12 12"><rect width="12" height="12" fill="#b0b0b0" /><path d="M2 0v12M10 0v12" stroke="#222" strokeDasharray="1.500 1.500" /><path d="M4 1v10h4V1z" fill="#333" /></svg>;
}
function Whip() {
  return <svg className="h-3.5 w-3.5" viewBox="0 0 14 14" fill="none" stroke="#a4a4a4" strokeWidth="1.200"><path d="M6.500 7.500c1.500-.5 1-3-1-2.500s-2.500 4 0 5 5-1.500 4.500-4.500-5-4-7-1.500-2 6 1 7.500 7 0 8-3.500.5-4 .5-6" /></svg>;
}

function Switches({ l }: { l: Layer }) {
  const av = l.kind === "video";
  const cells: (React.ReactNode | "box" | null)[] = [
    <Shy />, l.kind === "adj" ? "box" : l.kind === "text" ? <Star /> : null, <Slash />, l.fx ? <Fx /> : null,
    av ? "box" : null, "box", l.kind === "adj" ? <Adjust /> : "box", "box",
  ];
  return (
    <span className="flex">
      {cells.map((c, i) => (
        <span key={i} className="flex h-[17px] w-[15px] items-center justify-center text-[#b8b8b8]">
          {c !== null && <span className="grid h-3.5 w-[13px] place-items-center bg-[#262626]">{c === "box" ? null : c}</span>}
        </span>
      ))}
    </span>
  );
}

function LayerTable() {
  const box = <span className="block h-3.5 w-[13px] bg-[#262626]" />;
  return (
    <table className={"w-full table-fixed border-collapse text-[12px] leading-4 text-[#b8b8b8] " + LIST}>
      <colgroup>
        <col className="w-[63px]" /><col className="w-[22px]" /><col className="w-[17px]" /><col className="w-[29px]" /><col /><col className="w-[120px]" /><col className="w-[37px]" /><col className="w-[89px]" /><col className="w-[21px]" />
      </colgroup>
      <thead>
        <tr className="h-[19px] bg-[#232323] text-left">
          <th className="p-0"><span className="flex items-center pl-1.5"><Eye /><FaVolumeUp size={11} className="ml-1" /><span className="ml-[7px] h-[7px] w-[7px] rounded-full bg-[#b8b8b8]" /><FaLock size={9} className="ml-2" /></span></th>
          <th className="p-0"><span className="flex border-l border-black pl-[17px]"><Tag /></span></th>
          <th className="p-0"><span className="ml-3.5 block h-3.5 border-l border-black" /></th>
          <th className="p-0 pl-1 text-[11px] font-normal">#</th>
          <th className="p-0 font-normal"><span className="border-l border-black pl-1.5">レイヤー名</span></th>
          <th className="p-0"><span className="flex">{[<Shy />, <Star className="text-[#b4b4b4]" />, <svg className="h-3 w-3" viewBox="0 0 12 12" stroke="#b4b4b4" strokeWidth="2" strokeDasharray="2 1"><path d="M1 1l10 10" /></svg>, <Fx />, <Film />, <Blur />, <Adjust />, <svg className="h-3 w-3" viewBox="0 0 12 12" fill="none" stroke="#b0b0b0"><path d="M6 1l4.500 2.500v5L6 11 1.500 8.500v-5zM1.500 3.500L6 6l4.500-2.500M6 6v5" /></svg>].map((n, i) => <span key={i} className="grid w-[15px] place-items-center font-normal">{n}</span>)}</span></th>
          <th colSpan={3} className="p-0 font-normal"><span className="ml-3.5 border-l border-black pl-1.5">親とリンク</span></th>
        </tr>
      </thead>
      <tbody>
        {LAYERS.map((l, i) => (
          <tr key={i} className="h-[19px] border-b border-[#202020] bg-[#2e2e2e]">
            <td className="p-0"><span className="flex items-center"><span className="flex w-[18px] justify-center pl-1"><Eye /></span><span className="w-[15px]">{l.kind === "video" && box}</span><span className="w-[15px]">{box}</span>{box}</span></td>
            <td className="p-0 pl-[7px] text-[#a0a0a0]"><ChevronRight size={12} /></td>
            <td className="p-0"><span className={"block h-4 w-3.5 " + l.color} /></td>
            <td className="p-0 pl-[5px] text-[11px]">{l.name && i + 1}</td>
            <td className="p-0 whitespace-nowrap">
              <span className="flex items-center">
                <span className="grid w-[26px] place-items-center">
                  {l.kind === "adj" ? <span className="h-[15px] w-[15px] border border-black bg-white" /> : l.kind === "text" ? <span className="font-['Liberation_Serif',serif] font-bold text-[#a8a8a8]">T</span> : <FileIcon />}
                </span>
                {l.name}
              </span>
            </td>
            <td className="p-0"><Switches l={l} /></td>
            <td className="p-0 pl-4"><Whip /></td>
            <td className="p-0"><span className="flex h-4 items-center bg-[#1f1f1f]">{l.name && <><select aria-label={`レイヤー ${i + 1} の親`} className="h-4 w-full appearance-none bg-transparent pl-1.5 outline-none"><option>なし</option></select><ChevronDown size={12} className="mr-0.5 -ml-3.5 shrink-0" /></>}</span></td>
            <td className="p-0" />
          </tr>
        ))}
      </tbody>
    </table>
  );
}

const CACHE: [number, number][] = [[0, 5.9], [7.1, 7.5], [9.1, 10], [22.7, 23.9], [24.2, 24.9], [26.7, 38.2], [38.6, 38.8], [39.2, 39.8], [40.7, 41.4], [41.7, 42.4], [43.2, 43.4], [44.2, 44.4], [44.8, 45], [45.9, 46.6]];
const MARKERS = [{ t: 6.6, n: "" }, { t: 48.4, n: "2" }, { t: 67.6, n: "3" }];

function Tracks() {
  const labels = Array.from({ length: 16 }, (_, i) => i * 5);
  const fmt = (s: number) => (s === 0 ? "0:00s" : s === 60 ? "01:00s" : `${String(s % 60).padStart(2, "0")}s`);
  return (
    <div className="relative min-w-0 flex-1 border-l border-black pt-[3px]">
      <div className="flex h-full flex-col">
        <div className="flex h-2.5 shrink-0 pr-4"><span className="w-1.5 rounded-l-full bg-[#2d8ceb]" /><span className="flex-1 border border-black bg-[#666]" /><span className="w-[7px] rounded-r-full bg-[#2d8ceb]" /></div>
        <div className="mr-4 h-5 shrink-0 overflow-hidden pr-[7px] pl-1.5 text-[10px] text-[#b0b0b0]">
          <div className="relative h-full">
            {labels.map((s) => (
              <span key={s} className="absolute flex h-full -translate-x-1/2 flex-col items-center justify-between" style={{ left: pct(s) }}><span className="leading-[14px]">{fmt(s)}</span><span className="h-[5px] w-px bg-[#888]" /></span>
            ))}
          </div>
        </div>
        <div className="flex h-[17px] shrink-0 pr-4">
          <span className="w-1.5 rounded-l-[4px] bg-[#2d8ceb]" />
          <div className="relative flex-1 border border-black bg-[#606060]">
            {MARKERS.map((m) => (
              <React.Fragment key={m.t}>
                <span className="absolute top-0 ml-[5px] grid h-3 w-[19px] place-items-center border border-[#222] bg-[#b0b0b0] text-[10px] leading-none text-[#222]" style={{ left: pct(m.t) }}>{m.n}</span>
                <svg className="absolute bottom-0 h-2 w-2.5" viewBox="0 0 10 8" style={{ left: pct(m.t) }}><path d="M0 8V4l5-4 5 4v4z" fill="#b8b8b8" stroke="#222" /></svg>
              </React.Fragment>
            ))}
          </div>
          <span className="mr-0.5 w-[5px] rounded-r-[3px] bg-[#2d8ceb]" />
        </div>
        <div className="relative mr-[23px] ml-1.5 h-1 shrink-0">
          {CACHE.map(([a, b]) => <span key={a} className="absolute top-0 h-[3px] bg-[#1a1fb0]" style={{ left: pct(a), width: pct(b - a) }} />)}
          <span className="absolute top-0 h-[3px] w-0.5 bg-[#22c04a]" style={{ left: pct(0.6) }} />
        </div>
        <div className="flex min-h-0 flex-1">
          <div className="min-w-0 flex-1 overflow-hidden bg-[#343434] pr-[7px] pl-1.5">
            {LAYERS.map((l, i) => (
              <div key={i} className="relative h-[19px] border-b border-[#262626] bg-[#3c3c3c]">
                {l.dims?.map(([a, b]) => <span key={a} className="absolute top-px h-4 border border-[#667872] bg-[#4a5350]" style={{ left: pct(a), width: pct(b - a) }} />)}
                {l.bar && <span className={"absolute top-px h-4 border " + (l.red ? "border-[#8c4646] bg-[#7c3739]" : "border-[#86958f] bg-[#748580]")} style={{ left: pct(l.bar[0]), width: pct(l.bar[1] - l.bar[0]) }} />}
              </div>
            ))}
          </div>
          <div className="w-4 bg-[#1f1f1f]"><div className="mt-[18px] ml-px h-[99px] w-3.5 rounded-full bg-[#363636]" /></div>
        </div>
      </div>
      <div className="pointer-events-none absolute top-5 right-[23px] bottom-0 left-1.5">
        <div className="absolute inset-y-0 flex -translate-x-1/2 flex-col items-center" style={{ left: pct(7.78) }}>
          <svg className="h-3 w-[11px]" viewBox="0 0 11 12"><path d="M0 0h11v6L5.500 12 0 6z" fill="#2d8ceb" /><path d="M5.500 6v6" stroke="#113" /></svg>
          <span className="w-px flex-1 bg-[#4a90d9]" />
        </div>
        <div role="tooltip" className="absolute top-7 border border-[#777] bg-white px-[3px] text-[11px] leading-[18px] whitespace-nowrap text-[#555] shadow-[3px_3px_2px_rgba(0,0,0,0.4)]" style={{ left: pct(7.78) }}>現在の時間インジケーター</div>
      </div>
      <div className="absolute top-[35px] right-0 flex w-4 flex-col items-center gap-2">
        <svg className="h-4 w-[11px]" viewBox="0 0 11 16" fill="#b0b0b0"><path d="M0 0h11v11l-5.500 5L0 11z" /></svg>
        <svg className="h-3.5 w-3.5" viewBox="0 0 14 14" fill="none" stroke="#b0b0b0" strokeWidth="1.400"><path d="M0 7h5M1 7l5-6v6" /><rect x="8" y="3" width="6" height="7" fill="#b0b0b0" stroke="none" /><circle cx="7" cy="9" r="3" fill="#333" /></svg>
      </div>
    </div>
  );
}

function TimelineTab({ n }: { n: number }) {
  return <button className="flex w-[166px] items-center gap-[11px] text-left text-[#8f8f8f]"><span className="h-2.5 w-2.5 bg-[#a59476]" />プリコンポジション {n}</button>;
}

function Timeline() {
  return (
    <section className="mr-px ml-px flex min-w-0 flex-1 flex-col border border-[#3f7fbd] bg-[#232323] text-[10px]">
      <div className="mb-0.5 flex h-[26px] shrink-0 items-stretch">
        <button className="ml-7 w-[103px] text-left text-[#8a8a8a]">レンダーキュー</button>
        <div className="mr-9 flex w-[157px] items-center border-b-2 border-[#b8b8b8] pt-0.5 text-[#c4c4c4]"><button aria-label="タブを閉じる" className="w-[15px] text-left text-[#999]">×</button><span className="mr-[11px] h-2.5 w-2.5 bg-[#a59476]" /><button className="text-[11px]">oyubgm_020_control</button><Burger className="ml-auto text-[#b0b0b0]" /></div>
        <TimelineTab n={1} /><TimelineTab n={2} /><TimelineTab n={3} />
      </div>
      <div className="flex min-h-0 flex-1">
        <div className="flex w-[651px] shrink-0 flex-col overflow-hidden">
          <div className="flex h-[35px] shrink-0 items-start">
            <div className="w-[111px] text-center"><p className="pt-px pr-1 text-[16px] leading-[18px] font-bold text-[#2d8ceb]">0:00:07:47</p><p className={"text-[11px] leading-3 text-[#24619b] " + LIST}>00467 (60.00 fps)</p></div>
            <SearchField label="レイヤーを検索" className="mt-1.5 h-[21px] w-[372px]" />
            <div className="mt-2 flex flex-1 items-center pl-[15px] text-[#b0b0b0]">
              <svg className="mr-[18px] h-4 w-[17px]" viewBox="0 0 17 16" fill="currentColor" stroke="currentColor"><path d="M0 5h10M6 5v6h4" fill="none" strokeWidth="1.500" /><path d="M0 3h4v3H0zM10 3h5v4h-5zM10 9h5v3h-5zM12 13h4l-2 2z" stroke="none" /></svg>
              <svg className="mr-2.5 h-4 w-4" viewBox="0 0 16 16" fill="none" stroke="currentColor" strokeWidth="1.300"><rect y="7.500" width="16" height="6.500" fill="#666" stroke="none" /><path d="M3.500 7c0-6 9-6 9 0zM8 2v11M6 4v3M10 4v3" /></svg>
              <svg className="mr-2.5 h-4 w-4" viewBox="0 0 16 16" fill="currentColor"><path d="M4 0h11v12H4zM0 4h3v9h9v2H0z" /><path d="M6 1v10M13 1v10" stroke="#222" strokeDasharray="1.500 1.500" /></svg>
              <svg className="mr-[18px] h-4 w-4" viewBox="0 0 16 16" fill="none" stroke="#999"><circle cx="5" cy="10" r="4.500" /><circle cx="7" cy="8" r="4.500" /><circle cx="10" cy="6" r="5" fill="#777" /></svg>
              <svg className="h-4 w-4" viewBox="0 0 16 16" fill="none" stroke="currentColor" strokeWidth="1.300"><path d="M1 3h14v12H1zM4 1v3M8 1v3M12 1v3M3 6c5 0 4 6 10 6" /></svg>
            </div>
          </div>
          <div className="min-h-0 flex-1 overflow-hidden"><LayerTable /></div>
        </div>
        <Tracks />
      </div>
      <div className="flex h-[17px] shrink-0 items-center border-t border-black text-[#a4a4a4]">
        <div className="flex w-[104px] items-center gap-2 pl-[7px]">
          <Copy size={11} className="text-[#3a8dde]" />
          <svg className="h-3 w-3" viewBox="0 0 12 12" fill="none" stroke="currentColor" strokeWidth="1.300"><circle cx="4.500" cy="4.500" r="3.500" /><rect x="5" y="5" width="6" height="6" fill="#232323" /></svg>
          <svg className="h-3 w-3" viewBox="0 0 12 12" fill="currentColor"><path d="M5 0h2v12H5zM1 3h3v1l1 2-1 2v1H1V8l1-2-1-2zM11 3H8v1L7 6l1 2v1h3V8l-1-2 1-2z" /></svg>
          <svg className="h-3 w-[13px]" viewBox="0 0 13 12" fill="currentColor"><circle cx="4.500" cy="4" r="4" /><path d="M3 7h3v3h5v2H1v-2h2zM9 1h4v1h-1v6h-1V2H9z" /></svg>
        </div>
        <p className="flex-none text-[11px] leading-4 text-[#b0b0b0]">フレームレンダリング時間<span className="ml-1.5 text-[#8fa063]">53ms</span></p>
        <button className="ml-[128px] h-full w-[133px] rounded-[2px] border border-[#1c1c1c] pr-1.5 text-[11px] leading-3 text-[#8f8f8f]">スイッチ / モード</button>
        <svg className="ml-auto h-2 w-2.5" viewBox="0 0 10 8" fill="currentColor"><path d="M0 6l3-3 1 1 2-2 4 4z" /></svg>
        <input type="range" aria-label="タイムラインのズーム" defaultValue={0} className="mx-3 h-2.5 w-12 appearance-none bg-[linear-gradient(#484848,#484848)] bg-[length:100%_2px] bg-center bg-no-repeat [&::-webkit-slider-thumb]:h-2.5 [&::-webkit-slider-thumb]:w-2.5 [&::-webkit-slider-thumb]:appearance-none [&::-webkit-slider-thumb]:rounded-full [&::-webkit-slider-thumb]:border-2 [&::-webkit-slider-thumb]:border-[#999] [&::-webkit-slider-thumb]:bg-[#232323]" />
        <svg className="h-2.5 w-4" viewBox="0 0 16 10" fill="currentColor"><path d="M0 8l4-6 1 1-3 5zM4 8l5-7 7 7z" /></svg>
        <span className="w-[952px] shrink" />
      </div>
    </section>
  );
}

/* ---------- audio ---------- */

const DB_LEFT = ["0.0", "-3.0", "-6.0", "-9.0", "-12.0", "-15.0", "-18.0", "-21.0", "-24.0"];
const DB_RIGHT = ["12.0 dB", "9.0", "6.0", "3.0", "0.0 dB", "-3.0", "-6.0", "-9.0", "-12.0 dB"];

function Fader({ label, big }: { label: string; big?: boolean }) {
  return (
    <input type="range" aria-label={label} defaultValue={50}
      className={"h-[220px] w-5 appearance-none bg-[linear-gradient(#3a3a3a,#3a3a3a)] bg-[length:2px_100%] bg-center bg-no-repeat [writing-mode:vertical-lr] [&::-webkit-slider-thumb]:appearance-none [&::-webkit-slider-thumb]:rounded-full [&::-webkit-slider-thumb]:border-2 [&::-webkit-slider-thumb]:border-[#8c8c8c] [&::-webkit-slider-thumb]:bg-[#232323] " +
        (big ? "[&::-webkit-slider-thumb]:h-5 [&::-webkit-slider-thumb]:w-5" : "[&::-webkit-slider-thumb]:h-3.5 [&::-webkit-slider-thumb]:w-3.5")} />
  );
}

function AudioPanel() {
  return (
    <section className="flex w-[207px] shrink-0 flex-col bg-[#232323] text-[10px] text-[#9c9c9c]">
      <div className="flex h-7 items-center gap-3 pl-[13px] text-[#b4b4b4]"><button>オーディオ</button><Burger /></div>
      <div className="flex min-h-0 flex-1 pl-[9px]">
        <div className="flex w-[27px] flex-col pt-[7px] pb-[5px]">
          <span className="mb-0.5 h-[5px] border border-[#484848] bg-black" />
          <div className="flex flex-1 justify-center border border-[#484848] bg-[linear-gradient(#6e2020,#5f5a1c_17%,#1c6420_36%,#1c5a20_48%,#1e3a20_72%,#1c381e)]"><span className="w-px bg-black" /></div>
        </div>
        <ul className="ml-1 flex w-[26px] flex-col justify-between pt-[15px] pb-[7px] text-center leading-3">{DB_LEFT.map((d) => <li key={d}>{d}</li>)}</ul>
        <div className="ml-4 flex w-[67px] flex-col pt-[19px]">
          <div className="flex justify-between"><Fader label="左レベル" /><Fader label="レベル" big /><Fader label="右レベル" /></div>
          <div className="mt-1.5 flex justify-between px-1.5 text-[#3a8dde]"><button>0</button><button>0</button></div>
        </div>
        <ul className="ml-1.5 flex flex-col justify-between pt-3.5 pb-[21px] leading-3 whitespace-nowrap">{DB_RIGHT.map((d) => <li key={d}>{d}</li>)}</ul>
      </div>
    </section>
  );
}

/* ---------- desktop task bar ---------- */

function TaskButton({ label, children, open, active }: { label: string; children: React.ReactNode; open?: boolean; active?: boolean }) {
  return (
    <button aria-label={label} className={"relative grid h-10 w-[49px] place-items-center " + (active ? "bg-[#55555a]" : "")}>
      {children}
      {(open || active) && <span className={"absolute bottom-0 h-0.5 bg-[#76b9ed] " + (active ? "w-full" : "w-10")} />}
    </button>
  );
}
function Adobe({ t, className }: { t: string; className: string }) {
  return <span className={"grid h-[22px] w-[22px] place-items-center rounded-[4px] text-[13px] leading-none font-bold " + className}>{t}</span>;
}

function Owl() {
  return (
    <svg className="h-10 w-[78px]" viewBox="0 0 78 40" aria-hidden>
      <path d="M27 40c0-6-4-10-10-12-6-1-10-4-13-10 4 5 8 7 12 7 2-3 1-7-1-10 4 3 5 7 4 10 4 2 8 5 11 10l8 1c12 0 24 0 40-2v6z" fill="#5a4130" />
      <path d="M16 25c-4 0-8-2-11-4M13 26c-3 2-6 2-8 1M20 26c4-3 6-5 6-9M19 22c2-3 1-6 0-8" stroke="#6b5140" fill="none" />
      <path d="M31 9C31-1 45-2 47 8c9 3 14 14 22 29-6-2-10-3-12-1l-14 1C33 31 30 20 31 9z" fill="#f3f2f0" stroke="#b5b0aa" strokeWidth=".7" />
      <path d="M46 11c9 5 15 13 22 26-8-3-15-5-18-13-2-4-4-8-4-13z" fill="#cdc9c4" />
      <path d="M51 17c4 4 8 10 12 17M48 19c3 6 7 11 12 14" stroke="#97918a" fill="none" strokeWidth=".8" />
      <path d="M33 5c3-3 6-2 6 1 1-3 5-3 7 0 0 5-3 8-7 9-4-1-6-4-6-10z" fill="#fff" stroke="#d3ccc4" strokeWidth=".6" />
      <circle cx="36" cy="8" r="1.200" fill="#111" /><circle cx="42" cy="8" r="1.200" fill="#111" /><path d="M39 9l1 3h-2z" fill="#c9a79a" />
      <path d="M42 37l3-1 4 1v2h-7z" fill="#e09142" />
    </svg>
  );
}

function Chrome() {
  return (
    <svg className="h-6 w-6" viewBox="0 0 24 24" aria-hidden>
      <circle cx="12" cy="12" r="12" fill="#fbc116" />
      <path d="M12 12L1.600 6A12 12 0 0122.400 6H12z" fill="#ea4335" />
      <path d="M1.600 6L7 15l5 3-2.500 5.800A12 12 0 011.600 6z" fill="#34a853" />
      <path d="M22.400 6H12l5 9-5 9A12 12 0 0022.400 6z" fill="#fbc116" />
      <circle cx="12" cy="12" r="5.600" fill="#fff" /><circle cx="12" cy="12" r="4.400" fill="#2f7de1" />
    </svg>
  );
}

function TaskBar() {
  return (
    <footer className="flex h-10 shrink-0 items-center bg-[linear-gradient(90deg,#451e20_0%,#451e20_21%,#1f2e22_26%,#1f2e22_31%,#3b1f20_35%,#331d22_45%,#232024_53%,#2c2430_60%,#3a393b_64%,#3c3b3d_74%,#2e2236_80%,#2f2037_100%)] text-white">
      <button aria-label="スタート" className="grid h-10 w-12 place-items-center"><FaWindows size={16} /></button>
      <label className="mr-0.5 flex h-10 w-[287px] items-center overflow-hidden bg-[#f2f2f2] text-black">
        <Search size={17} className="mr-[11px] ml-3 shrink-0 -scale-x-100" strokeWidth={1.800} />
        <input placeholder="ここに入力して検索" aria-label="ここに入力して検索" className="w-[165px] bg-transparent text-[13px] outline-none placeholder:text-[#333]" />
        <Owl />
      </label>
      <TaskButton label="タスクビュー"><svg className="h-4 w-[17px]" viewBox="0 0 17 16" fill="none" stroke="#fff" strokeWidth="1.200"><path d="M1 0v3h10V0M1 5.500h10v5H1zM1 16v-3h10v3M15 0v4M15 9v7" /><path d="M14 5h2.500v3H14z" fill="#fff" stroke="none" /></svg></TaskButton>
      <TaskButton label="Chrome" open><Chrome /></TaskButton>
      <TaskButton label="エクスプローラー" open><svg className="h-5 w-[22px]" viewBox="0 0 22 20"><path d="M0 1h8l2 3h12v14H0z" fill="#e8a92b" /><path d="M0 5h22v13H0z" fill="#fbd667" /><path d="M4 19v-8h14v8h-4v-4H8v4z" fill="#3f8fd8" /></svg></TaskButton>
      <TaskButton label="Microsoft Store"><svg className="h-6 w-[22px]" viewBox="0 0 22 24"><path d="M7 6V2h8v4" stroke="#2a9bd8" strokeWidth="2" fill="none" /><path d="M0 5h22v15a3 3 0 01-3 3H3a3 3 0 01-3-3z" fill="#f4f4f4" /><path d="M6 9h4.500v4.500H6z" fill="#e5502d" /><path d="M11.500 9H16v4.500h-4.500z" fill="#7fb933" /><path d="M6 14.500h4.500V19H6z" fill="#1c9be0" /><path d="M11.500 14.500H16V19h-4.500z" fill="#f7b61a" /></svg></TaskButton>
      <TaskButton label="メモ帳"><svg className="h-[22px] w-[22px]" viewBox="0 0 22 22"><path d="M7 1l13 2-4 17-15-2z" fill="#9fd4e0" /><path d="M7 1l13 2-1 3L6 4z" fill="#d8d8d8" /><path d="M16 20l4-17 1 15z" fill="#5c93a3" /></svg></TaskButton>
      <TaskButton label="Spotify" open><FaSpotify size={24} color="#1ed760" className="rounded-full bg-black" /></TaskButton>
      <TaskButton label="Netflix"><span className="grid h-6 w-6 place-items-center bg-black"><svg className="h-4 w-2.5" viewBox="0 0 10 16"><path d="M0 0h3v16H0zM7 0h3v16H7z" fill="#b1060f" /><path d="M0 0h3l7 16H7z" fill="#e50914" /></svg></span></TaskButton>
      <TaskButton label="Prime Video"><span className="flex h-6 w-6 flex-col items-center bg-[#1f9bf0] pt-0.5 text-[8px] leading-[7px] font-bold text-[#0b2440]"><span>prime</span><span>video</span><svg className="mt-px h-1.5 w-4" viewBox="0 0 16 6" fill="none" stroke="#0b2440" strokeWidth="1.200"><path d="M1 1c4 4 10 4 14 0M12 1h3v3" /></svg></span></TaskButton>
      <TaskButton label="YouTube"><FaYoutube size={25} color="#ff0000" className="bg-[radial-gradient(#fff_30%,transparent_31%)]" /></TaskButton>
      <TaskButton label="辞書"><svg className="h-6 w-[22px]" viewBox="0 0 22 24"><path fillRule="evenodd" d="M2 1h13v9l-2-2V3H5l5 3v15l-2 2-3-2H2z" fill="#fff" /><path d="M4.500 4l4.500 3v14l-4.500-2z" fill="#222" stroke="#fff" strokeWidth="1.200" /><path d="M10 6l3 0 7 14-2 1z" fill="#f4ee28" stroke="#222" strokeWidth=".6" /></svg></TaskButton>
      <TaskButton label="Premiere Pro"><Adobe t="Pr" className="bg-[#00005b] text-[#9999ff]" /></TaskButton>
      <TaskButton label="After Effects" active><Adobe t="Ae" className="bg-[#00005b] text-[#9999ff]" /></TaskButton>
      <TaskButton label="Photoshop"><Adobe t="Ps" className="bg-[#001e36] text-[#31a8ff]" /></TaskButton>
      <TaskButton label="Illustrator"><Adobe t="Ai" className="bg-[#330000] text-[#ff9a00]" /></TaskButton>
      <TaskButton label="To Do"><svg className="h-5 w-6" viewBox="0 0 24 20"><path d="M1 10l4-4 7 7-4 6z" fill="#1f5fb8" /><path d="M5 14.500L19.500 0 24 4.500 9.500 19z" fill="#3f9bf2" /></svg></TaskButton>
      <TaskButton label="Discord" open><span className="relative grid h-6 w-6 place-items-center rounded-full bg-[#5865f2]"><FaDiscord size={15} /><span className="absolute -right-0.5 -bottom-0.5 grid h-3 w-3 place-items-center rounded-full bg-[#ed4245]"><span className="h-1 w-1 rounded-full bg-white" /></span></span></TaskButton>
      <TaskButton label="Creative Cloud" open><svg className="h-[22px] w-[22px]" viewBox="0 0 22 22"><defs><linearGradient id="cc" x1="0" y1="0" x2="1" y2="1"><stop offset="0" stopColor="#e8283c" /><stop offset=".35" stopColor="#e83fb0" /><stop offset=".6" stopColor="#f59a23" /><stop offset=".8" stopColor="#6fd14a" /><stop offset="1" stopColor="#2a9bf0" /></linearGradient></defs><rect width="22" height="22" rx="4" fill="url(#cc)" /><path d="M7.500 15.500a4 4 0 110-8c3 0 4 4 6 5.500M14.500 15.500a4 4 0 10-4-6M8 15.500h7M8 13c-2 0-2-3 0-3 1.500 0 2 2 3.500 3" stroke="#fff" strokeWidth="1.500" fill="none" /></svg></TaskButton>
      <div className="ml-auto flex items-center">
        <ChevronUp size={16} className="mr-2" />
        <FaCloud size={17} className="mr-2 text-[#ddd]" />
        <FaMicrophone size={16} className="mr-2" />
        <svg className="mr-2 h-[15px] w-[15px]" viewBox="0 0 15 15" fill="none" stroke="#ddd" strokeWidth="1.200"><path d="M1 13C1 6 6 1 13 1M4 14c0-5 4-9 10-9.500M7.500 14c0-3 2.500-5.500 6.500-6" /><circle cx="12.500" cy="12.500" r="1.500" fill="#ddd" /></svg>
        <Volume2 size={16} className="mr-2.5" strokeWidth={1.500} />
        <span className="mr-[15px] text-[17px]">A</span>
        <span className="grid h-[15px] w-4 place-items-center bg-white"><span className="grid h-3 w-3 place-items-center rounded-full bg-[#222] text-[9px] leading-none font-bold">J</span></span>
        <time className="mr-2 ml-4 w-[60px] text-center text-[11px] leading-[18px]">21:14<br />2023/12/21</time>
        <svg className="mr-[19px] ml-2 h-[17px] w-[17px]" viewBox="0 0 17 17" fill="#fff"><path d="M0 0h16v9h-5v5H8l-3 3v-3H0z" /><path d="M3 3.500h10M3 6.500h10M3 9.500h5" stroke="#2e2036" /><path d="M14 9a4 4 0 11-3 6c2 0 3-2 3-6z" /></svg>
        <span className="mr-1 h-10 w-px bg-[#8b8590]" />
      </div>
    </footer>
  );
}

export default function App() {
  return (
    <div className="flex h-screen w-full flex-col overflow-hidden bg-[#161616] font-['Roboto','Noto_Sans_CJK_JP',sans-serif] [font-feature-settings:'palt']">
      <TitleBar />
      <MenuBar />
      <ToolBar />
      <main className="flex min-h-0 flex-1 flex-col gap-1">
        <div className="flex min-h-0 flex-1 gap-1">
          <ProjectPanel />
          <EffectsColumn />
          <CompPanel />
          <div className="flex w-[343px] shrink-0 flex-col gap-1">
            <div className="flex h-[216px] shrink-0 gap-[5px]"><PropertiesPanel /><AlignPanel /></div>
            <EasePanel />
          </div>
        </div>
        <div className="flex h-[296px] shrink-0 gap-1 pb-px"><Timeline /><AudioPanel /></div>
      </main>
      <TaskBar />
    </div>
  );
}
